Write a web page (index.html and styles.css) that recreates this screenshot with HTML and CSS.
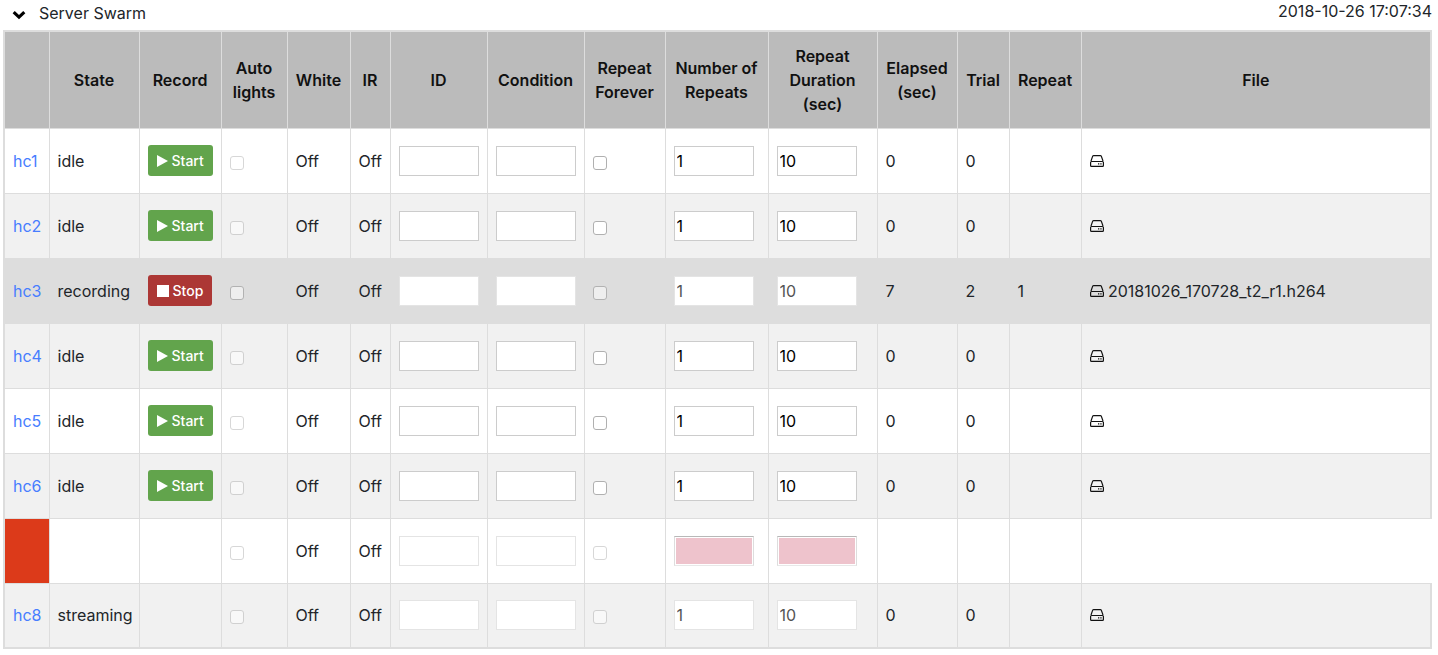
FILE: index.html
```html
<!DOCTYPE html>
<html lang="en">
<head>
<meta charset="utf-8">
<title>Server Swarm</title>
<link rel="stylesheet" href="styles.css">
</head>
<body>
<svg class="sprite" aria-hidden="true">
  <symbol id="play" viewBox="0 0 11 12"><path d="M0 0L11 6L0 12Z" fill="currentColor"/></symbol>
  <symbol id="stop" viewBox="0 0 12 12"><path d="M0 0H12V12H0Z" fill="currentColor"/></symbol>
  <symbol id="drive" viewBox="0 0 14 12"><path d="M1 6L2.6 1.4Q2.9.6 3.7.6H10.3Q11.1.6 11.4 1.4L13 6M1.5 6.5H12.5Q13.4 6.5 13.4 7.4V10.4Q13.4 11.3 12.5 11.3H1.5Q.6 11.3.6 10.4V7.4Q.6 6.5 1.5 6.5Z" fill="none" stroke="currentColor" stroke-width="1.2"/><path d="M8 8.3H9.3V9.6H8ZM10.3 8.3H11.6V9.6H10.3Z" fill="currentColor"/></symbol>
</svg>
<header class="bar">
  <button class="toggle" type="button" aria-label="Collapse Server Swarm" aria-expanded="true"><svg class="chevron" viewBox="0 0 14 10" aria-hidden="true"><path d="M1.7 2.2L7 7.2L12.3 2.2" fill="none" stroke="currentColor" stroke-width="3.1"/></svg></button>
  <span class="title">Server Swarm</span>
  <time class="clock" datetime="2018-10-26T17:07:34">2018-10-26 17:07:34</time>
</header>
<main>
<table class="swarm">
  <colgroup>
    <col class="c-name"><col class="c-state"><col class="c-record"><col class="c-auto"><col class="c-white"><col class="c-ir"><col class="c-text"><col class="c-text"><col class="c-forever"><col class="c-number"><col class="c-duration"><col class="c-elapsed"><col class="c-trial"><col class="c-repeat"><col>
  </colgroup>
  <thead>
    <tr><th></th><th>State</th><th>Record</th><th>Auto lights</th><th>White</th><th>IR</th><th>ID</th><th>Condition</th><th>Repeat Forever</th><th>Number of Repeats</th><th>Repeat Duration (sec)</th><th>Elapsed (sec)</th><th>Trial</th><th>Repeat</th><th>File</th></tr>
  </thead>
  <tbody>
    <tr>
      <td><a href="#hc1">hc1</a></td><td>idle</td>
      <td><button class="btn start" type="button"><svg class="play"><use href="#play"/></svg>Start</button></td>
      <td><input class="check" type="checkbox" aria-label="hc1 auto lights" disabled></td><td>Off</td><td>Off</td>
      <td><input class="field" type="text" aria-label="hc1 ID"></td><td><input class="field" type="text" aria-label="hc1 condition"></td>
      <td><input class="check" type="checkbox" aria-label="hc1 repeat forever"></td>
      <td><input class="field" type="text" aria-label="hc1 number of repeats" value="1"></td><td><input class="field" type="text" aria-label="hc1 repeat duration" value="10"></td>
      <td>0</td><td>0</td><td></td><td><svg class="drive"><use href="#drive"/></svg></td>
    </tr>
    <tr>
      <td><a href="#hc2">hc2</a></td><td>idle</td>
      <td><button class="btn start" type="button"><svg class="play"><use href="#play"/></svg>Start</button></td>
      <td><input class="check" type="checkbox" aria-label="hc2 auto lights" disabled></td><td>Off</td><td>Off</td>
      <td><input class="field" type="text" aria-label="hc2 ID"></td><td><input class="field" type="text" aria-label="hc2 condition"></td>
      <td><input class="check" type="checkbox" aria-label="hc2 repeat forever"></td>
      <td><input class="field" type="text" aria-label="hc2 number of repeats" value="1"></td><td><input class="field" type="text" aria-label="hc2 repeat duration" value="10"></td>
      <td>0</td><td>0</td><td></td><td><svg class="drive"><use href="#drive"/></svg></td>
    </tr>
    <tr class="active">
      <td><a href="#hc3">hc3</a></td><td>recording</td>
      <td><button class="btn stop" type="button"><svg class="square"><use href="#stop"/></svg>Stop</button></td>
      <td><input class="check" type="checkbox" aria-label="hc3 auto lights" disabled></td><td>Off</td><td>Off</td>
      <td><input class="field" type="text" aria-label="hc3 ID" disabled></td><td><input class="field" type="text" aria-label="hc3 condition" disabled></td>
      <td><input class="check" type="checkbox" aria-label="hc3 repeat forever" disabled></td>
      <td><input class="field" type="text" aria-label="hc3 number of repeats" value="1" disabled></td><td><input class="field" type="text" aria-label="hc3 repeat duration" value="10" disabled></td>
      <td>7</td><td>2</td><td>1</td><td><svg class="drive"><use href="#drive"/></svg> 20181026_170728_t2_r1.h264</td>
    </tr>
    <tr>
      <td><a href="#hc4">hc4</a></td><td>idle</td>
      <td><button class="btn start" type="button"><svg class="play"><use href="#play"/></svg>Start</button></td>
      <td><input class="check" type="checkbox" aria-label="hc4 auto lights" disabled></td><td>Off</td><td>Off</td>
      <td><input class="field" type="text" aria-label="hc4 ID"></td><td><input class="field" type="text" aria-label="hc4 condition"></td>
      <td><input class="check" type="checkbox" aria-label="hc4 repeat forever"></td>
      <td><input class="field" type="text" aria-label="hc4 number of repeats" value="1"></td><td><input class="field" type="text" aria-label="hc4 repeat duration" value="10"></td>
      <td>0</td><td>0</td><td></td><td><svg class="drive"><use href="#drive"/></svg></td>
    </tr>
    <tr>
      <td><a href="#hc5">hc5</a></td><td>idle</td>
      <td><button class="btn start" type="button"><svg class="play"><use href="#play"/></svg>Start</button></td>
      <td><input class="check" type="checkbox" aria-label="hc5 auto lights" disabled></td><td>Off</td><td>Off</td>
      <td><input class="field" type="text" aria-label="hc5 ID"></td><td><input class="field" type="text" aria-label="hc5 condition"></td>
      <td><input class="check" type="checkbox" aria-label="hc5 repeat forever"></td>
      <td><input class="field" type="text" aria-label="hc5 number of repeats" value="1"></td><td><input class="field" type="text" aria-label="hc5 repeat duration" value="10"></td>
      <td>0</td><td>0</td><td></td><td><svg class="drive"><use href="#drive"/></svg></td>
    </tr>
    <tr>
      <td><a href="#hc6">hc6</a></td><td>idle</td>
      <td><button class="btn start" type="button"><svg class="play"><use href="#play"/></svg>Start</button></td>
      <td><input class="check" type="checkbox" aria-label="hc6 auto lights" disabled></td><td>Off</td><td>Off</td>
      <td><input class="field" type="text" aria-label="hc6 ID"></td><td><input class="field" type="text" aria-label="hc6 condition"></td>
      <td><input class="check" type="checkbox" aria-label="hc6 repeat forever"></td>
      <td><input class="field" type="text" aria-label="hc6 number of repeats" value="1"></td><td><input class="field" type="text" aria-label="hc6 repeat duration" value="10"></td>
      <td>0</td><td>0</td><td></td><td><svg class="drive"><use href="#drive"/></svg></td>
    </tr>
    <tr>
      <td class="offline"></td><td></td><td></td>
      <td><input class="check" type="checkbox" aria-label="Auto lights" disabled></td><td>Off</td><td>Off</td>
      <td><input class="field" type="text" aria-label="ID" disabled></td><td><input class="field" type="text" aria-label="Condition" disabled></td>
      <td><input class="check" type="checkbox" aria-label="Repeat forever" disabled></td>
      <td><input class="field invalid" type="text" aria-label="Number of repeats" disabled></td><td><input class="field invalid" type="text" aria-label="Repeat duration" disabled></td>
      <td></td><td></td><td></td><td class="open-end"></td>
    </tr>
    <tr>
      <td><a href="#hc8">hc8</a></td><td>streaming</td><td></td>
      <td><input class="check" type="checkbox" aria-label="hc8 auto lights" disabled></td><td>Off</td><td>Off</td>
      <td><input class="field" type="text" aria-label="hc8 ID" disabled></td><td><input class="field" type="text" aria-label="hc8 condition" disabled></td>
      <td><input class="check" type="checkbox" aria-label="hc8 repeat forever" disabled></td>
      <td><input class="field" type="text" aria-label="hc8 number of repeats" value="1" disabled></td><td><input class="field" type="text" aria-label="hc8 repeat duration" value="10" disabled></td>
      <td>0</td><td>0</td><td></td><td><svg class="drive"><use href="#drive"/></svg></td>
    </tr>
  </tbody>
</table>
</main>
</body>
</html>
```
FILE: styles.css
```css
* { box-sizing: border-box; }
body {
  margin: 0;
  padding: 0 6px 0 3px;
  background: #fff;
  color: #212529;
  font: 16px/24px Inter, "Liberation Sans", sans-serif;
}
.sprite { display: none; }

.bar {
  display: flex;
  align-items: flex-start;
  height: 30px;
}
.toggle {
  margin: 0;
  padding: 10px 13px 0 9px;
  border: 0;
  background: none;
  color: #000;
  line-height: 0;
}
.chevron { width: 14px; height: 10px; }
.title { padding-top: 2px; line-height: 22px; }
.clock { margin-left: auto; line-height: 22px; }

.swarm {
  width: 100%;
  table-layout: fixed;
  border-collapse: collapse;
  border: 2px solid #ddd;
}
.swarm th, .swarm td {
  border: 1px solid #ddd;
  padding: 0 8px;
}
.swarm th {
  height: 97px;
  background: #bbb;
  color: #111;
  font-weight: 600;
  text-align: center;
}
.swarm td { height: 65px; text-align: left; vertical-align: middle; }
.swarm tbody tr:nth-child(even) { background: #f1f1f1; }
.swarm tbody .active { background: #ddd; }
.swarm .offline { background: #dc3a1a; }
.swarm .open-end { border-right-style: hidden; }
.swarm a { color: #477dff; text-decoration: none; }

.c-name { width: 45px; }
.c-state { width: 90px; }
.c-record { width: 82px; }
.c-auto { width: 66px; }
.c-white { width: 63px; }
.c-ir { width: 40px; }
.c-text { width: 97px; }
.c-forever { width: 81px; }
.c-number { width: 103px; }
.c-duration { width: 109px; }
.c-elapsed { width: 80px; }
.c-trial { width: 52px; }
.c-repeat { width: 72px; }

.field {
  display: block;
  width: 80px;
  height: 30px;
  margin: 0;
  padding: 0 2px;
  border: 1px solid #ccc;
  border-radius: 0;
  background: #fff;
  color: #000;
  font: inherit;
}
.field:disabled { border-color: #e4e4e4; color: #545454; }
.field.invalid {
  border-color: #b8b8b8 #ddd #e8e8e8;
  background: #eec3cc;
  box-shadow: inset 0 0 0 1px #fff;
}

.check {
  appearance: none;
  display: block;
  width: 14px;
  height: 14px;
  margin: 4px 0 0;
  border: 1px solid #b0b0b0;
  border-radius: 3px;
  background: #fff;
}
.check:disabled { opacity: 0.5; }
.active .check:disabled { border-color: #888; }

.btn {
  display: flex;
  align-items: center;
  gap: 4px;
  height: 31px;
  margin: 0;
  padding: 0 9px;
  border: 0;
  border-radius: 3px;
  color: #fff;
  font: 500 14px/21px Inter, "Liberation Sans", sans-serif;
}
.start { background: #62a44c; }
.stop { background: #ac3735; }
.play { width: 11px; height: 12px; }
.square { width: 12px; height: 12px; }
.drive { width: 14px; height: 12px; color: #111; vertical-align: 0; }
```
